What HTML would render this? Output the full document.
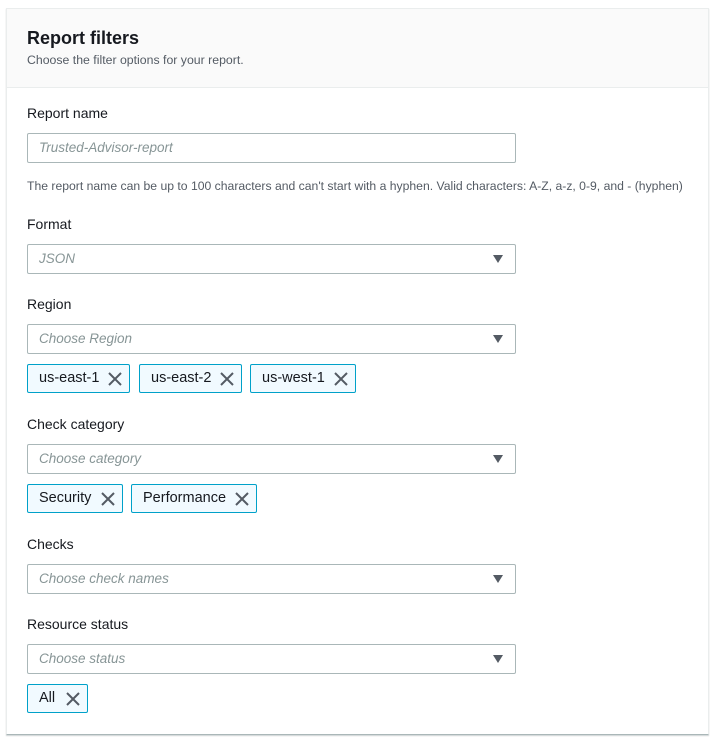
<!DOCTYPE html>
<html><head><meta charset="utf-8"><style>
body{margin:0;width:715px;height:739px;background:#fff;font-family:"Liberation Sans",Arial,sans-serif;color:#16191f;position:relative;overflow:hidden}
.panel{position:absolute;left:6px;top:8px;width:701px;height:725px;border:1px solid #eaeded;border-bottom:1px solid #aab7b8;box-shadow:0 1px 1px rgba(0,28,36,.2)}
.hdr{position:absolute;left:0;top:0;right:0;height:78px;background:#fafafa;border-bottom:1px solid #eaeded}
.a{position:absolute;white-space:nowrap}
.title{left:27px;top:28px;font-size:18px;font-weight:bold}
.sub{left:27px;top:53px;font-size:12.3px;color:#545b64}
.lbl{font-size:14px;left:27px}
.inp{position:absolute;left:27px;width:487px;height:28px;border:1px solid #aab7b8;border-radius:2px;background:#fff}
.inp span{position:absolute;left:11px;top:6px;font-size:13.5px;font-style:italic;color:#879596}
.inp i{position:absolute;right:12px;top:10px;width:0;height:0;border-left:5px solid transparent;border-right:5px solid transparent;border-top:8px solid #545b64}
.tag{position:absolute;height:27px;border:1px solid #00a1c9;border-radius:2px;background:#f1faff;font-size:14.5px;line-height:27px;padding-left:11px}
.tag svg{position:absolute;right:7px;top:7px}
.help{left:27px;top:179px;font-size:12.2px;color:#545b64}
</style></head><body>
<div class="panel"><div class="hdr"></div></div>
<div class="a title">Report filters</div>
<div class="a sub">Choose the filter options for your report.</div>

<div class="a lbl" style="top:105px">Report name</div>
<div class="inp" style="top:133px"><span>Trusted-Advisor-report</span></div>
<div class="a help">The report name can be up to 100 characters and can't start with a hyphen. Valid characters: A-Z, a-z, 0-9, and - (hyphen)</div>

<div class="a lbl" style="top:216px">Format</div>
<div class="inp" style="top:244px"><span>JSON</span><i></i></div>

<div class="a lbl" style="top:296px">Region</div>
<div class="inp" style="top:324px"><span>Choose Region</span><i></i></div>
<div class="tag" style="left:27px;top:364px;width:90px">us-east-1<svg width="14" height="14"><path d="M1 1L13 13M13 1L1 13" stroke="#545b64" stroke-width="2"/></svg></div>
<div class="tag" style="left:139px;top:364px;width:90px">us-east-2<svg width="14" height="14"><path d="M1 1L13 13M13 1L1 13" stroke="#545b64" stroke-width="2"/></svg></div>
<div class="tag" style="left:250px;top:364px;width:93px">us-west-1<svg width="14" height="14"><path d="M1 1L13 13M13 1L1 13" stroke="#545b64" stroke-width="2"/></svg></div>

<div class="a lbl" style="top:416px">Check category</div>
<div class="inp" style="top:444px"><span>Choose category</span><i></i></div>
<div class="tag" style="left:27px;top:484px;width:83px">Security<svg width="14" height="14"><path d="M1 1L13 13M13 1L1 13" stroke="#545b64" stroke-width="2"/></svg></div>
<div class="tag" style="left:131px;top:484px;width:113px">Performance<svg width="14" height="14"><path d="M1 1L13 13M13 1L1 13" stroke="#545b64" stroke-width="2"/></svg></div>

<div class="a lbl" style="top:536px">Checks</div>
<div class="inp" style="top:564px"><span>Choose check names</span><i></i></div>

<div class="a lbl" style="top:616px">Resource status</div>
<div class="inp" style="top:644px"><span>Choose status</span><i></i></div>
<div class="tag" style="left:27px;top:684px;width:48px">All<svg width="14" height="14"><path d="M1 1L13 13M13 1L1 13" stroke="#545b64" stroke-width="2"/></svg></div>
</body></html>
